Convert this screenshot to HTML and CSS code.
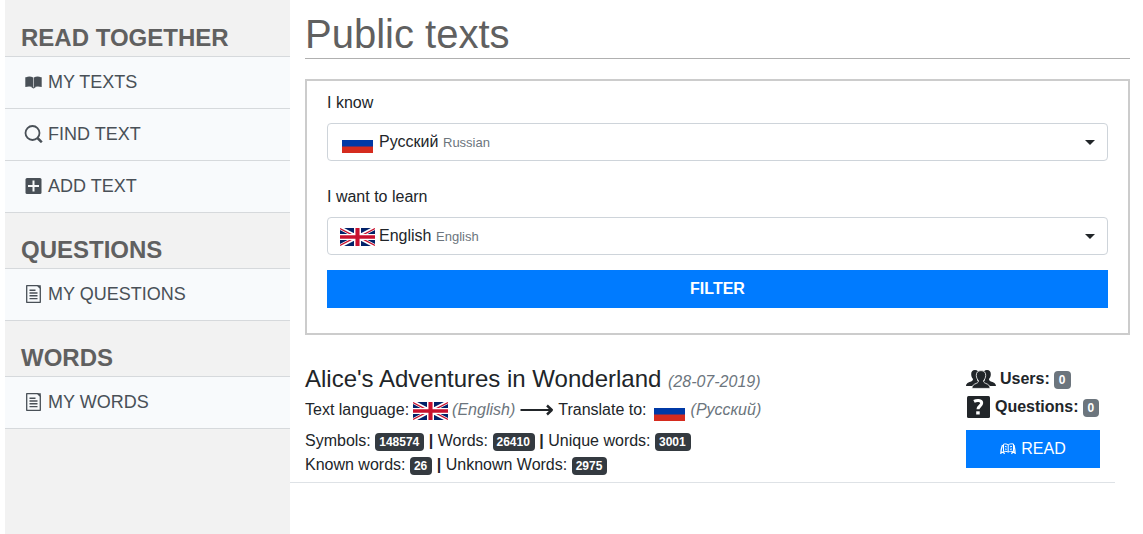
FILE: index.html
```html
<!DOCTYPE html>
<html lang="en">
<head>
<meta charset="utf-8">
<meta name="viewport" content="width=device-width, initial-scale=1">
<title>Public texts</title>
<link rel="stylesheet" href="styles.css">
</head>
<body>
<svg class="defs" aria-hidden="true">
  <symbol id="uk" viewBox="0 0 60 30" preserveAspectRatio="none">
    <path fill="#fff" d="M0 0h60v30H0z"/>
    <path fill="#012169" d="M7 0h18v9zM35 0h18L35 9zM0 3.500 13 10H0zM60 3.500 47 10h13zM0 26.500 13 20H0zM60 26.500 47 20h13zM7 30h18v-9zM35 30h18l-18-9z"/>
    <path stroke="#c8102e" stroke-width="2" d="M0 1l20 10M60 1 40 11M0 29l20-10M60 29 40 19"/>
    <path fill="#fff" d="M24 0h12v30H24zM0 10h60v10H0z"/>
    <path fill="#c8102e" d="M26.500 0h7v30h-7zM0 12h60v6H0z"/>
  </symbol>
  <symbol id="ru" viewBox="0 0 30 20" preserveAspectRatio="none">
    <path fill="#fff" d="M0 0h30v7H0z"/><path fill="#0039a6" d="M0 7h30v7H0z"/><path fill="#d52b1e" d="M0 13.500h30V20H0z"/>
  </symbol>
  <symbol id="page" viewBox="0 0 18 20">
    <path fill="none" stroke="currentColor" stroke-width="1.300" stroke-linejoin="round" d="M2.200 1.700h11l2.600 2.600v14H2.200z"/>
    <path fill="currentColor" d="M12.500 1.200h3.800v4z"/>
    <path stroke="currentColor" stroke-width="1.400" d="M5 6.200h6M5 9h8M5 11.800h8M5 14.600h8"/>
  </symbol>
</svg>
<div class="layout">
  <nav class="sidebar">
    <h2 class="group">READ TOGETHER</h2>
    <ul class="menu">
      <li><a class="item" href="#"><svg class="icon" viewBox="0 0 18 18"><path fill="currentColor" d="M.8 4.200h.8c2.300-.9 5-.8 7.100.4v9.900C6.500 13.300 4 13.200.8 14zM17.200 4.200h-.8c-2.300-.9-5-.8-7.100.4v9.900c2.200-1.200 4.700-1.300 7.900-.5zM6.500 14.300h5L9 15.500z"/></svg>MY TEXTS</a></li>
      <li><a class="item" href="#"><svg class="icon" viewBox="0 0 18 18"><g fill="none" stroke="currentColor" stroke-width="1.800"><circle cx="8" cy="8" r="7"/><path stroke-width="2.500" d="M13 13l4.300 4.300"/></g></svg>FIND TEXT</a></li>
      <li><a class="item" href="#"><svg class="icon" viewBox="0 0 18 18"><rect x="1" y="1" width="16" height="16" rx="1.500" fill="currentColor"/><path stroke="#f8f9fa" stroke-width="2" d="M9 3.500v11M3.500 9h11"/></svg>ADD TEXT</a></li>
    </ul>
    <h2 class="group">QUESTIONS</h2>
    <ul class="menu">
      <li><a class="item" href="#"><svg class="icon icon-page"><use href="#page"/></svg>MY QUESTIONS</a></li>
    </ul>
    <h2 class="group">WORDS</h2>
    <ul class="menu">
      <li><a class="item" href="#"><svg class="icon icon-page"><use href="#page"/></svg>MY WORDS</a></li>
    </ul>
  </nav>
  <main class="main">
    <h1 class="title">Public texts</h1>
    <form class="filter">
      <label class="label" for="know">I know</label>
      <div class="picker">
        <svg class="flag flag-ru"><use href="#ru"/></svg>
        <select class="select" id="know"><option>Русский</option></select>
        <small class="hint">Russian</small>
        <span class="caret"></span>
      </div>
      <label class="label" for="learn">I want to learn</label>
      <div class="picker">
        <svg class="flag flag-uk"><use href="#uk"/></svg>
        <select class="select" id="learn"><option>English</option></select>
        <small class="hint">English</small>
        <span class="caret"></span>
      </div>
      <button class="submit" type="button">FILTER</button>
    </form>
    <article class="text">
      <div class="info">
        <h2 class="name">Alice's Adventures in Wonderland <em class="date">(28-07-2019)</em></h2>
        <p class="langs">
          <span>Text language:</span>
          <svg class="flag flag-uk"><use href="#uk"/></svg>
          <em class="muted">(English)</em>
          <svg class="arrow" viewBox="0 0 34 12"><path fill="none" stroke="currentColor" stroke-width="2" d="M1 6h31"/><path fill="none" stroke="currentColor" stroke-width="2.400" stroke-linejoin="round" d="M27.500 1.500 32.300 6l-4.800 4.500"/></svg>
          <span>Translate to:</span>
          <svg class="flag flag-ru"><use href="#ru"/></svg>
          <em class="muted">(Русский)</em>
        </p>
        <p class="stats">Symbols: <span class="badge">148574</span> <b>|</b> Words: <span class="badge">26410</span> <b>|</b> Unique words: <span class="badge">3001</span></p>
        <p class="stats">Known words: <span class="badge">26</span> <b>|</b> Unknown Words: <span class="badge">2975</span></p>
      </div>
      <div class="side">
        <div class="count"><svg class="users" viewBox="0 0 30 20"><g fill="currentColor"><path d="M9 1c2.600 0 3.900 1.700 3.800 4.200-.1 2-.9 3.600-1.700 4.600-.4 1.600.3 2.200 2 2.900 2 .8 3.500 1.400 3.800 4.300H0c.2-2.900 2.300-3.500 4.400-4.300 1.900-.7 2.900-1.300 2.500-2.900C6 8.800 5.200 7.200 5.200 5.200 5.100 2.700 6.400 1 9 1z"/><path d="M21 1c-2.600 0-3.900 1.700-3.800 4.200.1 2 .9 3.600 1.700 4.600.4 1.600-.3 2.200-2 2.900-2 .8-3.500 1.400-3.800 4.300H30c-.2-2.900-2.300-3.500-4.400-4.300-1.900-.7-2.900-1.300-2.500-2.900.9-1 1.700-2.600 1.700-4.600C24.900 2.700 23.600 1 21 1z"/><path stroke="#fff" stroke-width=".8" d="M15 1.600c3.200 0 4.800 2 4.700 4.900-.1 2.300-1.100 4-2 4.900-.3 1.500.2 2.200 2 3 2.400.9 4.100 1.700 4.400 5H5.900c.3-3.300 2-4.100 4.400-5 1.800-.8 2.300-1.500 2-3-.9-.9-1.900-2.600-2-4.900C10.200 3.600 11.800 1.600 15 1.600z"/></g></svg>Users: <span class="badge badge-gray">0</span></div>
        <div class="count"><svg class="query" viewBox="0 0 24 24"><rect x="1" y="1" width="23" height="22" rx="1.500" fill="currentColor"/><path fill="none" stroke="#fff" stroke-width="3" d="M8 6.300c2.500-1.300 7.700-1.600 7.700 1.800 0 2.900-3.700 2.900-3.700 6.200"/><path fill="#fff" d="M10.200 16.300h3.500v3.200h-3.500z"/></svg>Questions: <span class="badge badge-gray">0</span></div>
        <a class="read" href="#"><svg class="reader" viewBox="0 0 16 14"><g fill="none" stroke="currentColor"><path d="M3.500 2.200c1.800-.5 3.200-.3 4.700.6 1.500-.9 3-1.200 5.300-.8v7.500c-2-.4-3.700-.2-5.300.6-1.500-.8-3-1-4.700-.5zM8.200 3v7M5 4.500l1.700.3M5 7l1.700.3M10 4.800l2-.3M10 7.300l2-.3"/><path stroke-width="1.300" d="M2.500 3 1.200 7.500.8 12M14 3l.8 4.500.4 4.500M1 10.500l2.500-.3 1 1.600M15 10.500l-2.500-.3-1 1.600"/></g></svg>READ</a>
      </div>
    </article>
  </main>
</div>
</body>
</html>
```
FILE: styles.css
```css
* { box-sizing: border-box; }
body { margin: 0; font: 16px/24px "Liberation Sans", Arial, sans-serif; color: #212529; background: #fff; }
h1, h2, p, ul { margin: 0; padding: 0; }
a { text-decoration: none; }
svg { flex: none; }
.defs { display: none; }
.layout { display: grid; grid-template-columns: 285px 1fr; min-height: 100vh; padding-left: 5px; }

.sidebar { background: #f2f2f2; padding-top: 1px; }
.group { padding: 22px 16px 4px; font-size: 24px; line-height: 29px; color: #606060; }
.menu { list-style: none; border-top: 1px solid #d6d9dc; }
.item { display: flex; align-items: center; gap: 5px; padding: 12px 19px; border-bottom: 1px solid #d6d9dc; background: #f8fafc; color: #495057; font-size: 18px; line-height: 27px; }
.icon { width: 19px; height: 18px; margin-bottom: 2px; }
.icon-page { height: 20px; }

.main { padding: 10px 13px 0 15px; min-width: 0; }
.title { font-size: 40px; font-weight: 400; line-height: 48px; color: #606060; border-bottom: 1px solid #b0b0b0; }
.filter { margin-top: 20px; padding: 10px 20px 25px; border: 2px solid #ccc; }
.label { display: block; margin-bottom: 8px; }
.picker { display: flex; align-items: center; height: 38px; margin-bottom: 24px; padding: 0 12px; border: 1px solid #ced4da; border-radius: 4px; }
.select { appearance: none; border: 0; margin: 0; padding: 0; background: none; color: inherit; font: inherit; }
.hint { margin: 2px 0 0 4px; font-size: 13px; color: #6c757d; }
.caret { margin-left: auto; border: 5px solid transparent; border-top-color: #212529; border-bottom: 0; }
.flag-uk { width: 35px; height: 18px; }
.flag-ru { width: 31px; height: 20px; }
.picker .flag-uk { margin: 2px 4px 0 0; }
.picker .flag-ru { margin: 2px 6px 0 2px; }
.submit { display: block; width: 100%; height: 38px; margin-top: -9px; border: 0; background: #007bff; color: #fff; font: bold 16px/24px "Liberation Sans", Arial, sans-serif; }

.text { display: grid; grid-template-columns: 1fr 134px; margin: 30px 15px 0 -15px; padding: 0 15px 5px; border-bottom: 1px solid #dee2e6; }
.name { font-size: 24px; font-weight: 400; line-height: 28px; }
.date { font-size: 16px; line-height: 24px; color: #6c757d; }
.muted { color: #6c757d; }
.langs { display: flex; align-items: center; gap: 4px; margin: 4px 0 7px; }
.langs .flag { margin-top: 2px; }
.langs .flag-ru { margin: 2px 2px 0 3px; }
.arrow { width: 35px; height: 12px; }
.stats { height: 24px; }
.badge { display: inline-block; padding: 3px 5px 3px 4px; border-radius: 4px; background: #343a40; color: #fff; font-size: 12px; font-weight: bold; line-height: 12px; }
.badge-gray { background: #6c757d; padding: 3px 5px; margin: 2px 0 0 4px; }
.count { display: flex; align-items: center; height: 28px; font-weight: bold; }
.users { width: 30px; height: 20px; margin-right: 4px; }
.query { width: 24px; height: 24px; margin-right: 5px; }
.read { display: flex; align-items: center; justify-content: center; gap: 5px; height: 38px; margin-top: 9px; background: #007bff; color: #fff; }
.reader { width: 16px; height: 14px; }
```
